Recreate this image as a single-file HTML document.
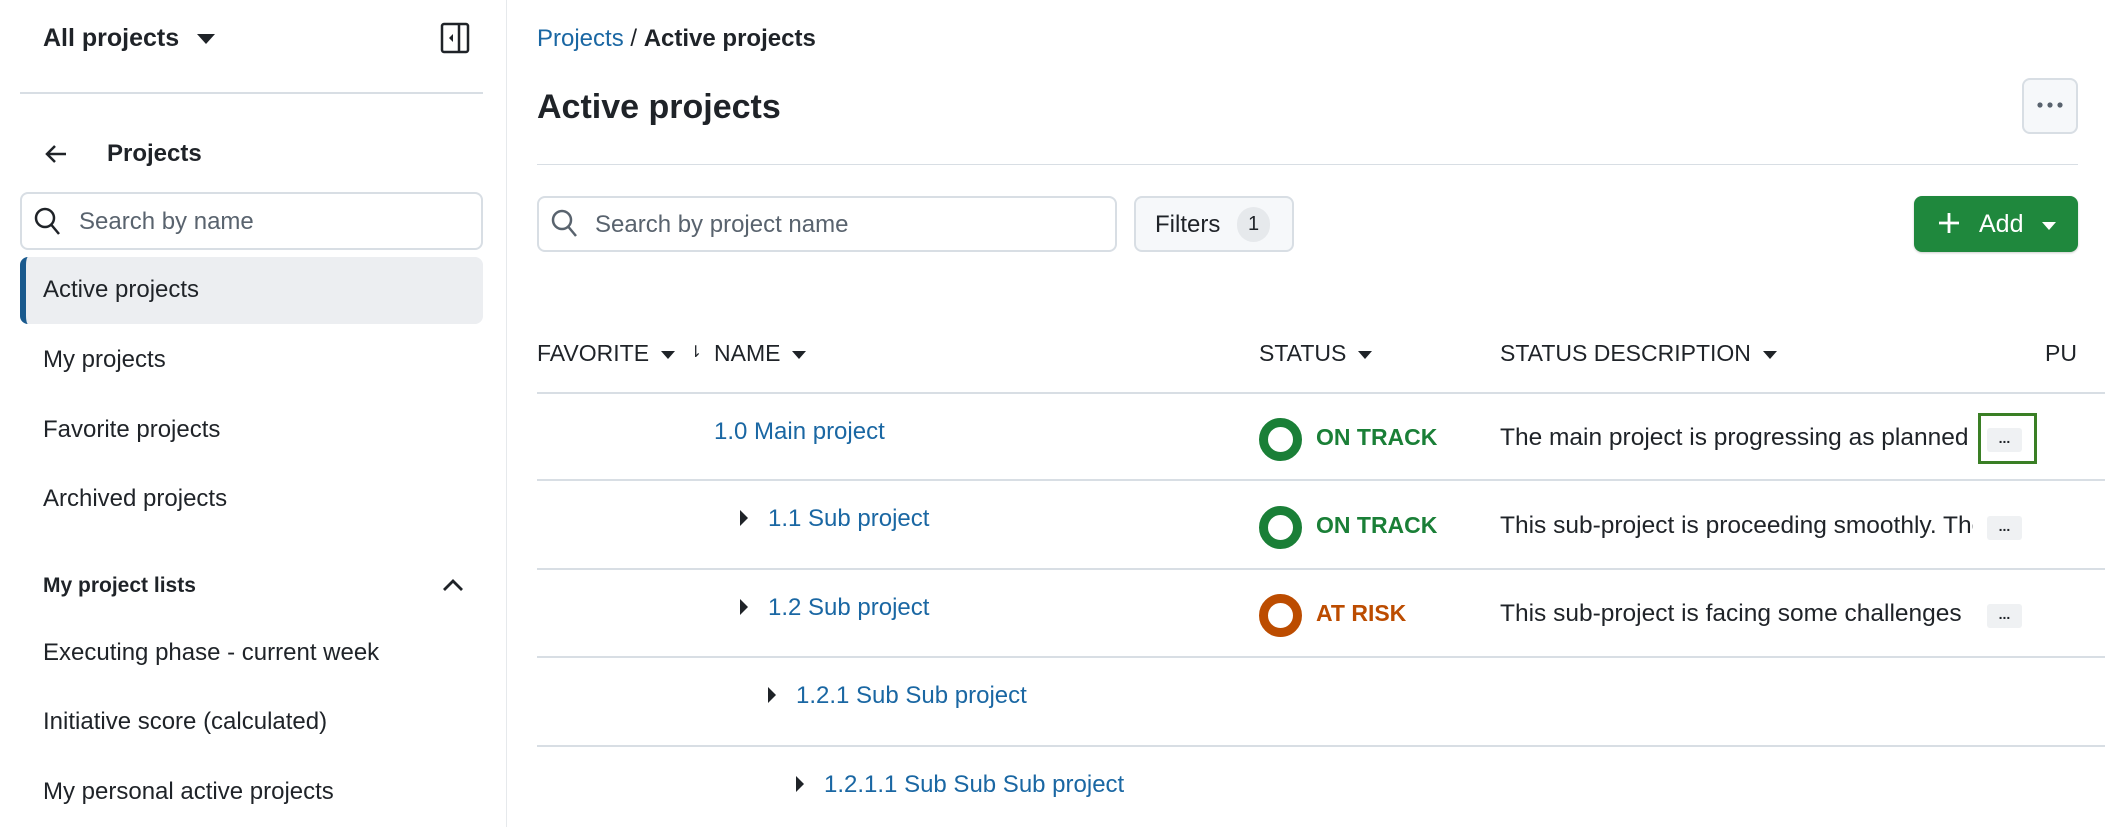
<!DOCTYPE html>
<html><head><meta charset="utf-8"><style>
*{box-sizing:border-box;margin:0;padding:0}
body{width:2105px;height:827px;overflow:hidden;background:#fff;font-family:"Liberation Sans",sans-serif;color:#1f2328;font-size:23px;position:relative}
.a{position:absolute;white-space:nowrap}
.lk{color:#1a67a3}
.line{position:absolute;height:2px;background:#d8dee4}
.tri{display:inline-block;width:0;height:0;border-left:7px solid transparent;border-right:7px solid transparent;border-top:8px solid #1f2328;vertical-align:middle;margin-left:12px}
.rt{position:absolute;width:0;height:0;border-top:8px solid transparent;border-bottom:8px solid transparent;border-left:8px solid #1f2328}
.ring{position:absolute;width:43px;height:43px;border-radius:50%;border:9px solid #1a7f37}
.dots{position:absolute;width:35px;height:24px;background:#eff1f3;border-radius:3px;font-size:14px;text-align:center;line-height:20px;font-weight:bold}
</style></head><body>
<!-- sidebar -->
<div class="a" style="left:43px;top:24px;font-size:25px;font-weight:bold;">All projects<span class="tri" style="margin-left:18px;border-left-width:9px;border-right-width:9px;border-top-width:10px"></span></div>
<svg class="a" style="left:440px;top:22px" width="30" height="32" viewBox="0 0 30 32"><rect x="2" y="2" width="26" height="28" rx="2" fill="none" stroke="#1f2328" stroke-width="2.5"/><line x1="19" y1="2" x2="19" y2="30" stroke="#1f2328" stroke-width="2.5"/><path d="M13 12 L9 16 L13 20Z" fill="#1f2328"/></svg>
<div class="line" style="left:20px;top:92px;width:463px"></div>
<svg class="a" style="left:44px;top:143px" width="24" height="22" viewBox="0 0 24 22"><path d="M22 11H3M11 3L3 11L11 19" fill="none" stroke="#1f2328" stroke-width="2.5"/></svg>
<div class="a" style="left:107px;top:140px;font-size:24px;font-weight:bold;">Projects</div>
<div class="a" style="left:20px;top:192px;width:463px;height:58px;border:2px solid #d8dee4;border-radius:8px"></div>
<svg class="a" style="left:34px;top:207px" width="28" height="30" viewBox="0 0 28 30"><circle cx="11" cy="11" r="9" fill="none" stroke="#1f2328" stroke-width="2.5"/><line x1="17.5" y1="18" x2="25" y2="27" stroke="#1f2328" stroke-width="2.5"/></svg>
<div class="a" style="left:79px;top:208px;color:#59636e;font-size:24px">Search by name</div>
<div class="a" style="left:20px;top:257px;width:463px;height:67px;background:#eceef1;border-radius:8px;border-left:6px solid #1a5a8e"></div>
<div class="a" style="left:43px;top:276px;font-size:24px">Active projects</div>
<div class="a" style="left:43px;top:346px;font-size:24px">My projects</div>
<div class="a" style="left:43px;top:416px;font-size:24px">Favorite projects</div>
<div class="a" style="left:43px;top:485px;font-size:24px">Archived projects</div>
<div class="a" style="left:43px;top:574px;font-size:21px;font-weight:bold">My project lists</div>
<svg class="a" style="left:441px;top:577px" width="24" height="16" viewBox="0 0 24 16"><path d="M3 13L12 4L21 13" fill="none" stroke="#1f2328" stroke-width="2.8"/></svg>
<div class="a" style="left:43px;top:639px;font-size:24px">Executing phase - current week</div>
<div class="a" style="left:43px;top:708px;font-size:24px">Initiative score (calculated)</div>
<div class="a" style="left:43px;top:778px;font-size:24px">My personal active projects</div>
<div class="a" style="left:506px;top:0;width:1px;height:827px;background:#e6e9ec"></div>
<!-- main -->
<div class="a" style="left:537px;top:25px;font-size:24px"><span class="lk">Projects</span> / <b>Active projects</b></div>
<div class="a" style="left:537px;top:88px;font-size:34px;font-weight:bold">Active projects</div>
<div class="a" style="left:2022px;top:78px;width:56px;height:56px;border:2px solid #d8dee4;border-radius:8px;background:#f6f8fa"></div>
<svg class="a" style="left:2036px;top:101px" width="28" height="8" viewBox="0 0 28 8"><circle cx="4" cy="4" r="2.6" fill="#59636e"/><circle cx="14" cy="4" r="2.6" fill="#59636e"/><circle cx="24" cy="4" r="2.6" fill="#59636e"/></svg>
<div class="line" style="left:537px;top:164px;width:1541px;height:1px"></div>
<div class="a" style="left:537px;top:196px;width:580px;height:56px;border:2px solid #d8dee4;border-radius:8px"></div>
<svg class="a" style="left:551px;top:209px" width="28" height="30" viewBox="0 0 28 30"><circle cx="11" cy="11" r="9" fill="none" stroke="#59636e" stroke-width="2.5"/><line x1="17.5" y1="18" x2="25" y2="27" stroke="#59636e" stroke-width="2.5"/></svg>
<div class="a" style="left:595px;top:211px;color:#59636e;font-size:24px">Search by project name</div>
<div class="a" style="left:1134px;top:196px;width:160px;height:56px;border:2px solid #d8dee4;border-radius:8px;background:#f6f8fa"></div>
<div class="a" style="left:1155px;top:211px;font-size:24px">Filters</div>
<div class="a" style="left:1237px;top:207px;width:33px;height:35px;border-radius:17px;background:#e6e9ec;text-align:center;line-height:35px;font-size:20px">1</div>
<div class="a" style="left:1914px;top:196px;width:164px;height:56px;border-radius:8px;background:#1f883d;box-shadow:0 1px 2px rgba(0,0,0,.2)"></div>
<svg class="a" style="left:1937px;top:211px" width="24" height="24" viewBox="0 0 24 24"><path d="M12 2V22M2 12H22" stroke="#fff" stroke-width="2.8"/></svg>
<div class="a" style="left:1979px;top:210px;color:#fff;font-size:25px">Add</div>
<div class="a" style="left:2042px;top:222px;border-left:7px solid transparent;border-right:7px solid transparent;border-top:8px solid #fff"></div>
<!-- header -->
<div class="a" style="left:537px;top:340px;font-size:23px">FAVORITE<span class="tri"></span></div>
<div class="a" style="left:689px;top:342px;font-size:16px">⇂</div>
<div class="a" style="left:714px;top:340px;font-size:23px">NAME<span class="tri"></span></div>
<div class="a" style="left:1259px;top:340px;font-size:23px">STATUS<span class="tri"></span></div>
<div class="a" style="left:1500px;top:340px;font-size:23px">STATUS DESCRIPTION<span class="tri"></span></div>
<div class="a" style="left:2045px;top:340px;font-size:23px">PU</div>
<div class="line" style="left:537px;top:392px;width:1568px"></div>
<div class="line" style="left:537px;top:479px;width:1568px"></div>
<div class="line" style="left:537px;top:568px;width:1568px"></div>
<div class="line" style="left:537px;top:656px;width:1568px"></div>
<div class="line" style="left:537px;top:745px;width:1568px"></div>
<!-- rows -->
<div class="a lk" style="left:714px;top:418px;font-size:24px">1.0 Main project</div>
<div class="ring" style="left:1259px;top:418px"></div>
<div class="a" style="left:1316px;top:424px;color:#1a7f37;font-weight:bold;font-size:23px">ON TRACK</div>
<div class="a" style="left:1500px;top:424px;width:473px;overflow:hidden;font-size:24.5px">The main project is progressing as planned and</div>
<div class="a" style="left:1978px;top:413px;width:59px;height:51px;border:3px solid #3a7f25"></div>
<div class="dots" style="left:1987px;top:428px">...</div>

<div class="rt" style="left:740px;top:510px"></div>
<div class="a lk" style="left:768px;top:505px;font-size:24px">1.1 Sub project</div>
<div class="ring" style="left:1259px;top:506px"></div>
<div class="a" style="left:1316px;top:512px;color:#1a7f37;font-weight:bold;font-size:23px">ON TRACK</div>
<div class="a" style="left:1500px;top:512px;width:473px;overflow:hidden;font-size:24.5px">This sub-project is proceeding smoothly. The</div>
<div class="dots" style="left:1987px;top:516px">...</div>

<div class="rt" style="left:740px;top:599px"></div>
<div class="a lk" style="left:768px;top:594px;font-size:24px">1.2 Sub project</div>
<div class="ring" style="left:1259px;top:594px;border-color:#bc4c00"></div>
<div class="a" style="left:1316px;top:600px;color:#bc4c00;font-weight:bold;font-size:23px">AT RISK</div>
<div class="a" style="left:1500px;top:600px;width:473px;overflow:hidden;font-size:24.5px">This sub-project is facing some challenges</div>
<div class="dots" style="left:1987px;top:604px">...</div>

<div class="rt" style="left:768px;top:687px"></div>
<div class="a lk" style="left:796px;top:682px;font-size:24px">1.2.1 Sub Sub project</div>
<div class="rt" style="left:796px;top:776px"></div>
<div class="a lk" style="left:824px;top:771px;font-size:24px">1.2.1.1 Sub Sub Sub project</div>
</body></html>
